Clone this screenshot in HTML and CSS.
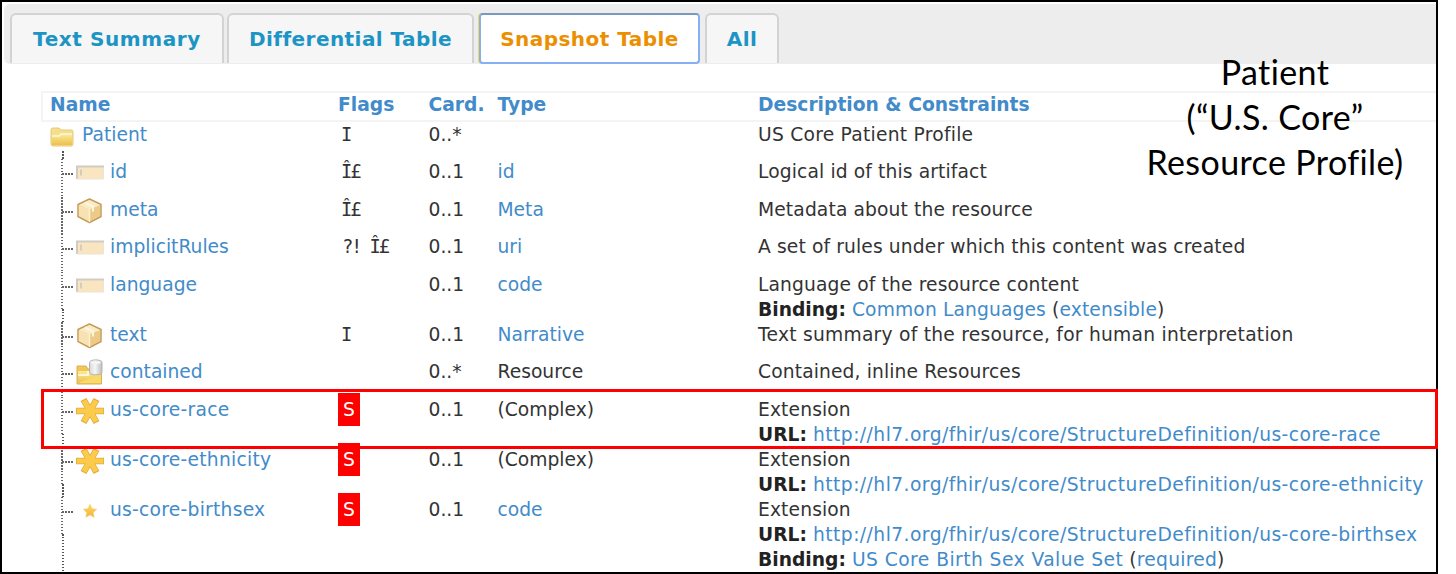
FILE: index.html
```
<!DOCTYPE html>
<html lang="en">
<head>
<meta charset="utf-8">
<title>Patient profile</title>
<link rel="stylesheet" href="styles.css">
</head>
<body>
<svg class="defs" width="0" height="0" aria-hidden="true">
  <defs>
    <linearGradient id="gold" x1="0" y1="0" x2="0" y2="1"><stop offset="0" stop-color="#fbeb9c"/><stop offset="1" stop-color="#edbf4d"/></linearGradient>
    <linearGradient id="star" x1="0" y1="0" x2="0" y2="1"><stop offset="0" stop-color="#ffd95e"/><stop offset="1" stop-color="#f0b43a"/></linearGradient>
    <linearGradient id="can" x1="0" x2="1"><stop offset="0" stop-color="#d8d8d8"/><stop offset=".45" stop-color="#f6f6f6"/><stop offset="1" stop-color="#bdbdbd"/></linearGradient>
    <symbol id="i-field" viewBox="0 0 28 37">
      <path d="M0 7h28v13H0z" fill="#f9e6c0"/>
      <path d="M1 20V7.500h27" fill="none" stroke="#cfccc6" stroke-width="2"/>
      <path d="M1 20h26.500V9" fill="none" stroke="#ece4d5"/>
      <path d="M5 10.500v6" stroke="#c9c4b8" stroke-width="1.500"/>
    </symbol>
    <symbol id="i-box" viewBox="0 0 28 37">
      <path d="M13.500 2 25 7.500v12L13.500 25.500 2 19.500v-12z" fill="#f3d595" stroke="#c49a58" stroke-width="1.500" stroke-linejoin="round"/>
      <path d="M13.500 3 24 8l-10.500 4.500L3 8z" fill="#faebc8"/>
      <path d="M2.800 8.500l10.700 4v12l-10.700-5.500z" fill="#f8e2b3"/>
      <path d="M24.200 8.500l-10.700 4v12l10.700-5.500z" fill="#ebca8a"/>
      <path d="M13.500 12v13" stroke="#fff2cf" stroke-width="1.400"/>
      <path d="M9 5.500l8 4v5" fill="none" stroke="#fff6de" stroke-width="2"/>
    </symbol>
    <symbol id="i-contained" viewBox="0 0 28 37">
      <path d="M1 7h9l2 3h13.500v15H1z" fill="#f5c64f" stroke="#d8b060"/>
      <path d="M2 12h23v12H2z" fill="url(#gold)"/>
      <path d="M2 16h10v-3h5" fill="none" stroke="#fff8d8" stroke-width="2"/>
      <path d="M2 24 25 15v9z" fill="#f9da68"/>
      <path d="M13.500 3.500c0-3.500 12.500-3.500 12.500 0v10c0 3-12.500 3-12.500 0z" fill="url(#can)" stroke="#b4b4b4"/>
      <ellipse cx="19.700" cy="3.500" rx="5.200" ry="1.700" fill="#f3f3f3"/>
    </symbol>
    <symbol id="i-ext" viewBox="0 0 28 37">
      <g fill="none" stroke="#e3aa3c" stroke-width="6.600"><path d="M0 14h28M7.500 2.500l13 23M20.500 2.500l-13 23"/></g>
      <g fill="none" stroke="#fdcb4c" stroke-width="5"><path d="M.800 14h26.400M8 3.500l12 21M20 3.500l-12 21"/></g>
    </symbol>
    <symbol id="i-star" viewBox="0 0 28 37">
      <path d="M14 7.500l2 4.300 4.600.500-3.400 3.200.900 4.700-4.100-2.300-4.100 2.300.900-4.700-3.400-3.200 4.600-.500z" fill="url(#star)" stroke="#f5cf72" stroke-width=".8"/>
    </symbol>
  </defs>
</svg>
<main class="frame">
  <nav class="tabs">
    <a class="tab t1"><span>Text Summary</span></a>
    <a class="tab t2"><span>Differential Table</span></a>
    <a class="tab t3 active"><span>Snapshot Table</span></a>
    <a class="tab t4"><span>All</span></a>
  </nav>
  <section class="table">
    <div class="row head"><div>Name</div><div>Flags</div><div>Card.</div><div>Type</div><div class="desc">Description &amp; Constraints</div></div>
    <div class="row root">
      <div class="name"><svg class="folder" viewBox="0 0 24 21"><path d="M1 4q0-2 2-2h6l2 2h10q2 0 2 2v12q0 2-2 2H3q-2 0-2-2z" fill="#f5df8d" stroke="#e8c878"/><path d="M2 10h7l2-2h11v11H2z" fill="url(#gold)"/><path d="M2 10h7l2-2h11" fill="none" stroke="#fff9d5" stroke-width="1.300"/></svg><a>Patient</a></div>
      <div class="flag"><span class="cap">I</span></div><div>0..*</div><div></div><div class="desc prose">US Core Patient Profile</div>
    </div>
    <div class="row">
      <div class="name"><i class="tree"></i><svg class="icon"><use href="#i-field"/></svg><a>id</a></div>
      <div class="flag"><span class="cap">Î</span>£</div><div>0..1</div><div><a>id</a></div><div class="desc">Logical id of this artifact</div>
    </div>
    <div class="row">
      <div class="name"><i class="tree"></i><svg class="icon"><use href="#i-box"/></svg><a>meta</a></div>
      <div class="flag"><span class="cap">Î</span>£</div><div>0..1</div><div><a>Meta</a></div><div class="desc">Metadata about the resource</div>
    </div>
    <div class="row">
      <div class="name"><i class="tree"></i><svg class="icon"><use href="#i-field"/></svg><a>implicitRules</a></div>
      <div class="flag pair"><span>?!</span><span><span class="cap">Î</span>£</span></div><div>0..1</div><div><a>uri</a></div><div class="desc">A set of rules under which this content was created</div>
    </div>
    <div class="row double">
      <div class="name"><i class="tree"></i><svg class="icon"><use href="#i-field"/></svg><a>language</a></div>
      <div></div><div>0..1</div><div><a>code</a></div><div class="desc">Language of the resource content<br><b>Binding:</b> <a>Common Languages</a> (<a>extensible</a>)</div>
    </div>
    <div class="row">
      <div class="name"><i class="tree"></i><svg class="icon"><use href="#i-box"/></svg><a>text</a></div>
      <div class="flag"><span class="cap">I</span></div><div>0..1</div><div><a>Narrative</a></div><div class="desc prose">Text summary of the resource, for human interpretation</div>
    </div>
    <div class="row">
      <div class="name"><i class="tree"></i><svg class="icon"><use href="#i-contained"/></svg><a>contained</a></div>
      <div></div><div>0..*</div><div>Resource</div><div class="desc">Contained, inline Resources</div>
    </div>
    <div class="row double">
      <div class="name"><i class="tree"></i><svg class="icon"><use href="#i-ext"/></svg><a class="wide">us-core-race</a></div>
      <div><span class="must">S</span></div><div>0..1</div><div>(Complex)</div><div class="desc">Extension<br><b>URL:</b> <a class="url">http://hl7.org/fhir/us/core/StructureDefinition/us-core-race</a></div>
    </div>
    <div class="row double">
      <div class="name"><i class="tree"></i><svg class="icon"><use href="#i-ext"/></svg><a class="wide">us-core-ethnicity</a></div>
      <div><span class="must">S</span></div><div>0..1</div><div>(Complex)</div><div class="desc">Extension<br><b>URL:</b> <a class="url">http://hl7.org/fhir/us/core/StructureDefinition/us-core-ethnicity</a></div>
    </div>
    <div class="row triple">
      <div class="name"><i class="tree"></i><svg class="icon"><use href="#i-star"/></svg><a class="wide">us-core-birthsex</a></div>
      <div><span class="must">S</span></div><div>0..1</div><div><a>code</a></div><div class="desc">Extension<br><b>URL:</b> <a class="url">http://hl7.org/fhir/us/core/StructureDefinition/us-core-birthsex</a><br><b>Binding:</b> <a class="url">US Core Birth Sex Value Set</a> (<a class="wide">required</a>)</div>
    </div>
  </section>
  <h1 class="title">Patient<br>(“U.S. Core”<br>Resource Profile)</h1>
  <div class="highlight"></div>
</main>
</body>
</html>
```
FILE: styles.css
```
* { box-sizing: border-box; }
body { margin: 0; background: #fff; overflow: hidden; }
.defs { position: absolute; }
.frame {
  position: relative;
  width: 1438px;
  height: 574px;
  border: 2px solid #000;
  color: #333;
  font: 18.7px/25px "DejaVu Sans", Verdana, sans-serif;
  font-variant-ligatures: none;
}
a { color: #428bca; }

.tabs {
  display: flex;
  height: 60px;
  margin: 2px 0 0 2px;
  padding: 9px 0 0 6px;
  background: #ededed;
  border-radius: 6px 0 0 6px;
}
.tab {
  height: 50px;
  padding-top: 12px;
  background: #f6f6f6;
  border: 2px solid #d3d3d3;
  border-bottom: 0;
  border-radius: 6px 6px 0 0;
  color: #1c94c4;
  font-size: 20px;
  font-weight: bold;
  line-height: 24px;
  letter-spacing: .45px;
  text-align: center;
  white-space: nowrap;
}
.t1 { width: 214px; margin-right: 3px; letter-spacing: .6px; }
.t2 { width: 247px; margin-right: 5px; }
.t3 { width: 221px; margin-right: 5px; }
.t4 { width: 74px; }
.tab.active {
  height: 51px;
  color: #eb8f00;
  background: #fff;
  border: 2px solid #86b0f5;
  border-top-color: #779bc0;
  border-radius: 4px;
  box-shadow: -1px 0 #fbd850;
}

.table { margin: 27px 0 0 39px; }
.row {
  display: grid;
  grid-template-columns: 297px 90.5px 69px 260.5px 1fr;
  height: 37.5px;
  white-space: nowrap;
}
.row.head {
  height: 30.5px;
  color: #428bca;
  font-weight: bold;
  line-height: 23px;
  border: 2px solid #f4f4f4;
  border-right: 0;
  grid-template-columns: 295px 90.5px 69px 260.5px 1fr;
}
.row.head > div:first-child { padding-left: 7px; }
.row.double { height: 50px; }
.row.triple { height: 75px; }
.name { display: flex; align-items: flex-start; height: 100%; }
.root > .name { background: repeating-linear-gradient(#555 0 1.5px, transparent 1.5px 3px) 21px 29px / 2px 9px no-repeat; }
.folder { width: 24px; height: 21px; margin: 4px 8px 0 9px; }
.tree {
  width: 35px;
  height: 100%;
  background:
    repeating-linear-gradient(90deg, #666 0 1.5px, transparent 1.5px 3px) 21px 14px / 12px 2px no-repeat,
    repeating-linear-gradient(#666 0 1.5px, transparent 1.5px 3px) 20px 0 / 2px 37.5px no-repeat,
    repeating-linear-gradient(#555 0 1.5px, transparent 1.5px 3px) 21px 37.5px / 2px 60px no-repeat;
}
.icon { width: 28px; height: 37px; margin-right: 6px; flex: none; }
.flag { padding-left: 4px; }
.cap { font-family: "DejaVu Sans Mono", monospace; letter-spacing: -3px; margin-left: -1px; margin-right: 1px; }
.pair { display: flex; gap: 10px; padding-left: 5px; }
.must { display: block; width: 22px; height: 33px; margin-top: -4px; padding: 4px 0 0 5px; background: #f00; color: #fff; }
.desc { letter-spacing: .12px; }
.prose { letter-spacing: .24px; }
.head .desc, .desc b { letter-spacing: 0; }
.url { letter-spacing: .44px; }
.wide { letter-spacing: .25px; }
b { color: #222; }

.title {
  position: absolute;
  top: 47px;
  left: 1123px;
  width: 300px;
  margin: 0;
  color: #000;
  font: 34px/45px Lato, sans-serif;
  font-variant-ligatures: none;
  letter-spacing: .4px;
  text-align: center;
}
.highlight {
  position: absolute;
  top: 387px;
  left: 39px;
  width: 1397px;
  height: 60px;
  border: 3px solid #f00;
}
```
